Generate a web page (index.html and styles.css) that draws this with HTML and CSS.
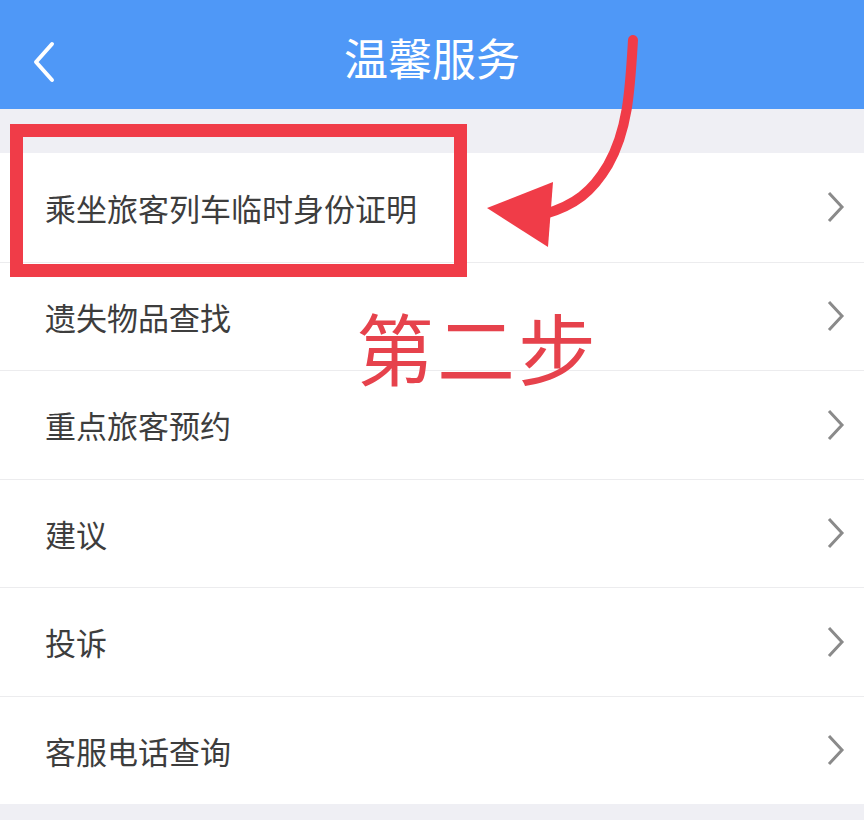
FILE: index.html
```html
<!DOCTYPE html>
<html lang="zh-CN">
<head>
<meta charset="utf-8">
<title>温馨服务</title>
<link rel="stylesheet" href="styles.css">
</head>
<body>
<div class="screen">
  <header class="navbar">
    <svg class="back" viewBox="0 0 30 44" width="30" height="44"><path d="M24 4 L8 22 L24 40" fill="none" stroke="#fff" stroke-width="4" stroke-linecap="round" stroke-linejoin="round"/></svg>
    <h1 class="title">温馨服务</h1>
  </header>
  <div class="gap"></div>
  <ul class="list">
    <li class="row"><span>乘坐旅客列车临时身份证明</span><svg class="chev" viewBox="0 0 20 34" width="20" height="34"><path d="M3 3 L16 17 L3 31" fill="none" stroke="#8a8a8a" stroke-width="3"/></svg></li>
    <li class="row"><span>遗失物品查找</span><svg class="chev" viewBox="0 0 20 34" width="20" height="34"><path d="M3 3 L16 17 L3 31" fill="none" stroke="#8a8a8a" stroke-width="3"/></svg></li>
    <li class="row"><span>重点旅客预约</span><svg class="chev" viewBox="0 0 20 34" width="20" height="34"><path d="M3 3 L16 17 L3 31" fill="none" stroke="#8a8a8a" stroke-width="3"/></svg></li>
    <li class="row"><span>建议</span><svg class="chev" viewBox="0 0 20 34" width="20" height="34"><path d="M3 3 L16 17 L3 31" fill="none" stroke="#8a8a8a" stroke-width="3"/></svg></li>
    <li class="row"><span>投诉</span><svg class="chev" viewBox="0 0 20 34" width="20" height="34"><path d="M3 3 L16 17 L3 31" fill="none" stroke="#8a8a8a" stroke-width="3"/></svg></li>
    <li class="row"><span>客服电话查询</span><svg class="chev" viewBox="0 0 20 34" width="20" height="34"><path d="M3 3 L16 17 L3 31" fill="none" stroke="#8a8a8a" stroke-width="3"/></svg></li>
  </ul>
  <div class="highlight"></div>
  <svg class="arrow" viewBox="0 0 864 820" width="864" height="820">
    <path d="M633 40 C 630 90, 628 130, 608 165 C 592 192, 575 205, 545 214" fill="none" stroke="#f03c48" stroke-width="10" stroke-linecap="round"/>
    <polygon points="487,208 553,182 548,247" fill="#f03c48"/>
  </svg>
  <div class="step">第二步</div>
</div>
</body>
</html>
```

FILE: styles.css
```css
* { box-sizing: border-box; }
html, body { margin: 0; padding: 0; }
body {
  width: 864px;
  height: 820px;
  overflow: hidden;
  background: #efeff4;
  font-family: "Noto Sans CJK SC", "Noto Sans", sans-serif;
}
.screen {
  position: relative;
  width: 864px;
  height: 820px;
  background: #efeff4;
}
.navbar {
  height: 109px;
  background: #4f98f7;
  display: flex;
  align-items: center;
  justify-content: center;
  position: relative;
}
.back {
  position: absolute;
  left: 28px;
  top: 40px;
}
.title {
  margin: 0;
  color: #fff;
  font-size: 44px;
  font-weight: 400;
  line-height: 1;
  margin-top: 4px;
  letter-spacing: 0;
}
.gap { height: 44px; }
.list {
  list-style: none;
  margin: 0;
  padding: 0;
  background: #fff;
}
.row {
  height: 108.5px;
  display: flex;
  align-items: center;
  justify-content: space-between;
  padding: 0 18px 0 45px;
  border-top: 1px solid #ececee;
  font-size: 31px;
  color: #3d3d3d;
}
.row:first-child { border-top: none; }
.chev { display: block; }
.highlight {
  position: absolute;
  left: 10px;
  top: 124px;
  width: 457px;
  height: 153px;
  border: 13px solid #f03c48;
}
.arrow {
  position: absolute;
  left: 0;
  top: 0;
  pointer-events: none;
}
.step {
  position: absolute;
  left: 356px;
  top: 300px;
  font-size: 78px;
  line-height: 1.2;
  color: #e6424c;
  font-weight: 400;
  letter-spacing: 3px;
}
```
